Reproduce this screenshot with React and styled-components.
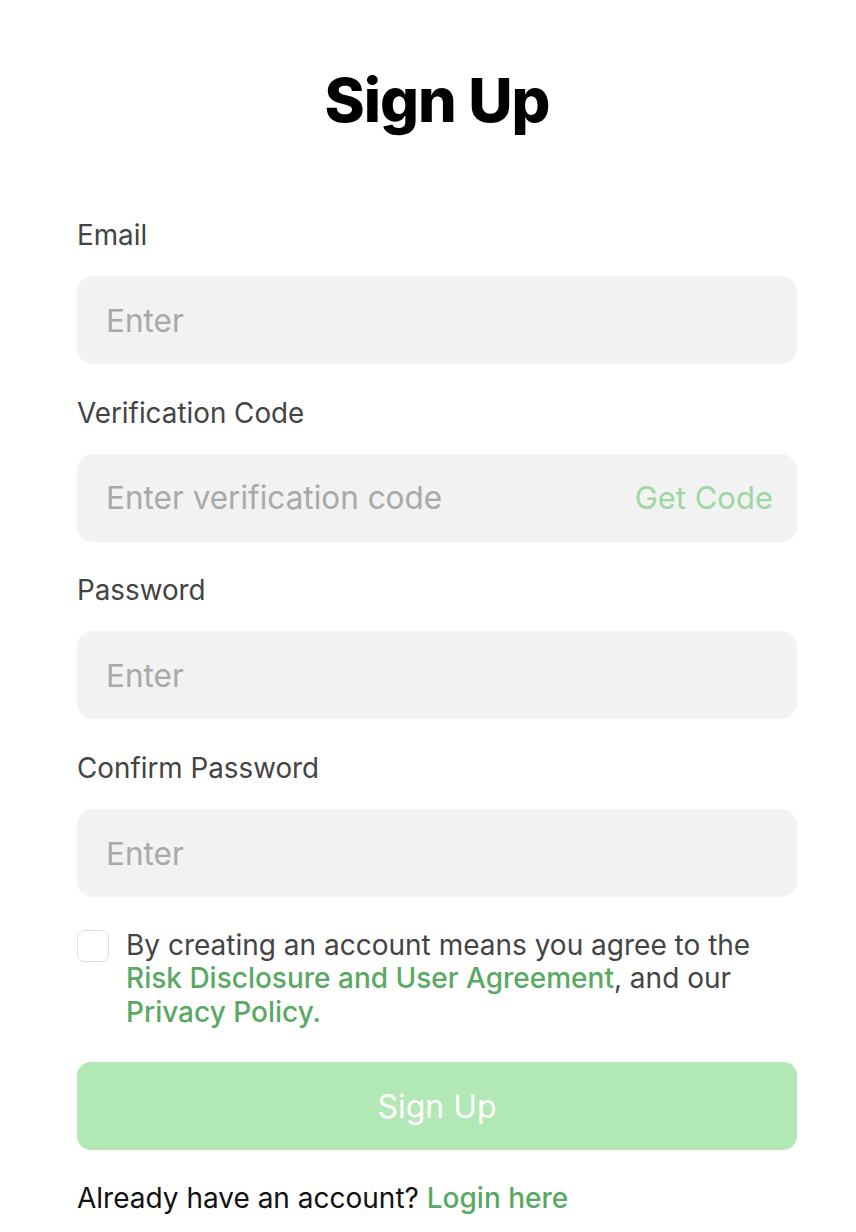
import React, { useState } from "react";
import styled, { createGlobalStyle } from "styled-components";

const GlobalStyle = createGlobalStyle`
  body {
    margin: 0;
    background: #ffffff;
    font-family: Inter, "Noto Sans", "Liberation Sans", sans-serif;
  }
`;

const Page = styled.div`
  width: 856px;
  box-sizing: border-box;
  padding: 61px 59px 0 77px;
`;

const Title = styled.h1`
  margin: 0 0 79px;
  text-align: center;
  font-size: 61px;
  line-height: 78px;
  font-weight: 800;
  letter-spacing: -1px;
  color: #000;
`;

const Field = styled.div`
  display: flex;
  flex-direction: column;
  gap: 24px;
  margin-bottom: 31.7px;
`;

const Label = styled.label`
  font-size: 27.8px;
  line-height: 34px;
  color: #444;
`;

const InputBox = styled.div`
  height: 88px;
  border-radius: 16px;
  background: #f2f2f2;
  display: flex;
  align-items: center;
  padding: 0 24px 0 29px;
`;

const Input = styled.input`
  flex: 1;
  min-width: 0;
  border: none;
  outline: none;
  background: transparent;
  padding: 0;
  font-family: inherit;
  font-size: 31.5px;
  color: #333;
  &::placeholder {
    color: #a9a9a9;
  }
`;

const GetCode = styled.button`
  border: none;
  background: transparent;
  padding: 0;
  font-family: inherit;
  font-size: 31px;
  color: #9fd7a3;
  cursor: pointer;
`;

const AgreeRow = styled.div`
  display: flex;
  gap: 17px;
`;

const Check = styled.span`
  flex: none;
  width: 30px;
  height: 30px;
  margin-top: 1px;
  border: 1.5px solid #dedede;
  border-radius: 7px;
  background: ${(p) => (p.$on ? "#5aa963" : "#fff")};
  cursor: pointer;
`;

const AgreeText = styled.p`
  margin: 0;
  font-size: 28px;
  line-height: 33.5px;
  color: #444;
`;

const Link = styled.a`
  color: #5aa963;
  font-weight: 500;
  text-decoration: none;
`;

const SubmitButton = styled.button`
  display: block;
  width: 100%;
  height: 88px;
  margin-top: 33px;
  border: none;
  border-radius: 14px;
  background: #b2e8b5;
  color: #fff;
  font-family: inherit;
  font-size: 32px;
`;

const Footer = styled.p`
  margin: 31px 0 0;
  font-size: 28px;
  line-height: 34px;
  color: #111;
`;

const fields = [
  { label: "Email", placeholder: "Enter" },
  { label: "Verification Code", placeholder: "Enter verification code", code: true },
  { label: "Password", placeholder: "Enter", type: "password" },
  { label: "Confirm Password", placeholder: "Enter", type: "password" },
];

export default function App() {
  const [agree, setAgree] = useState(false);

  return (
    <>
      <GlobalStyle />
      <Page>
        <Title>Sign Up</Title>
        {fields.map((f) => (
          <Field key={f.label}>
            <Label>{f.label}</Label>
            <InputBox>
              <Input type={f.type || "text"} placeholder={f.placeholder} />
              {f.code && <GetCode type="button">Get Code</GetCode>}
            </InputBox>
          </Field>
        ))}
        <AgreeRow>
          <Check $on={agree} onClick={() => setAgree(!agree)} />
          <AgreeText>
            By creating an account means you agree to the{" "}
            <Link href="#">Risk Disclosure and User Agreement</Link>, and our{" "}
            <Link href="#">Privacy Policy.</Link>
          </AgreeText>
        </AgreeRow>
        <SubmitButton type="button">Sign Up</SubmitButton>
        <Footer>
          Already have an account? <Link href="#">Login here</Link>
        </Footer>
      </Page>
    </>
  );
}
